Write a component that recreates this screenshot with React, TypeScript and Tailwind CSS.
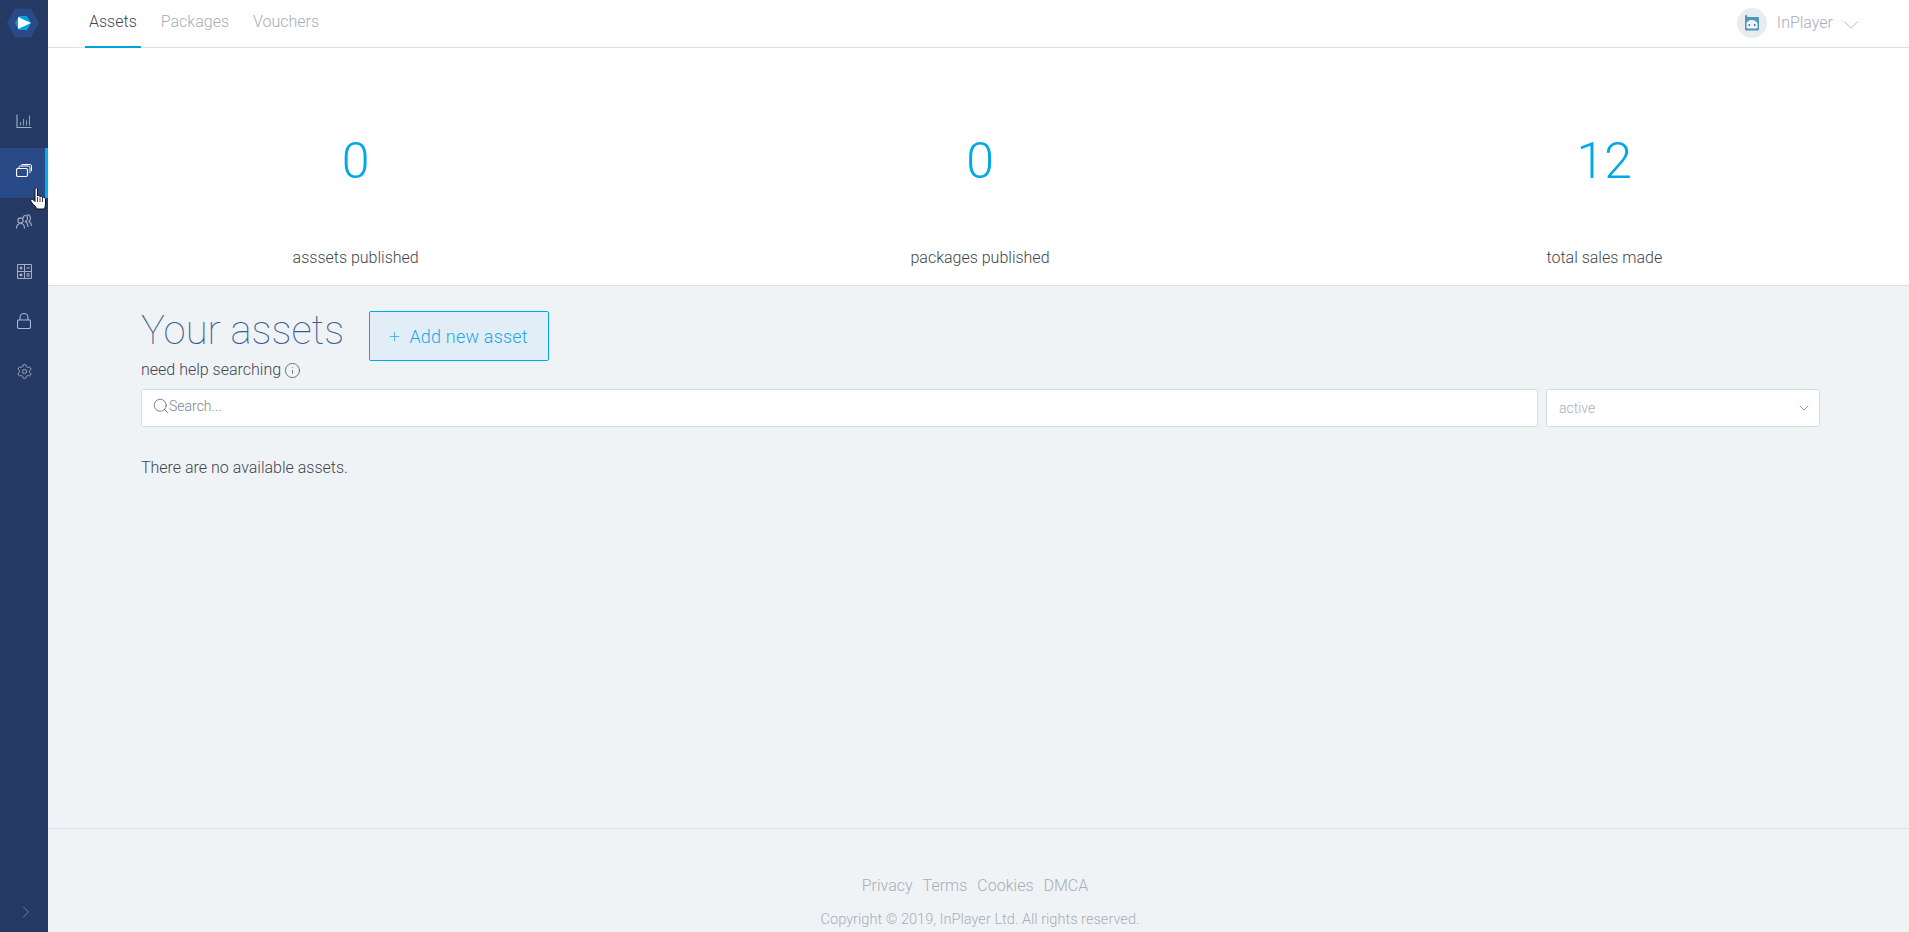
import { ChevronDown, ChevronRight, Info, Plus, Search, Settings } from "lucide-react";

const tabs = ["Assets", "Packages", "Vouchers"];
const stats = [
  { value: "0", label: "asssets published" },
  { value: "0", label: "packages published" },
  { value: "12", label: "total sales made" },
];

function Logo() {
  return (
    <svg width="34" height="30" viewBox="0 0 34 30">
      <polygon points="8,.5 24,.5 32,15 24,29.5 8,29.5 0,15" fill="#2a4a87" />
      <polygon points="12,8 20,8 24,15 20,22 12,22 8,15" fill="#00a3e0" />
      <polygon points="11,9 24,15 11,21" fill="#ffffff" />
    </svg>
  );
}

function ChartIcon() {
  return (
    <svg width="16" height="16" viewBox="0 0 16 16" fill="none" stroke="#a3afc5" strokeWidth="1.1">
      <path d="M1 1.5V14.5H15.5" />
      <path d="M4.5 12.5V9M7.5 12.5V6M10.5 12.5V7.5M13.5 12.5V2.5" stroke="#7f9cc0" />
    </svg>
  );
}

function CardsIcon() {
  return (
    <svg width="16" height="14" viewBox="0 0 16 14" fill="none" stroke="#ffffff" strokeWidth="1">
      <rect x="0.5" y="4.5" width="11" height="8" rx="1.5" strokeWidth="1.2" />
      <path d="M3 4V3.2C3 2.5 3.5 2 4.2 2H12.5C13.3 2 14 2.7 14 3.5V9" />
      <path d="M5.5 1.5V1.2C5.5 .8 5.8 .5 6.2 .5H14.2C15 .5 15.5 1 15.5 1.8V7" />
    </svg>
  );
}

function UsersIcon() {
  return (
    <svg width="16" height="15" viewBox="0 0 16 15" fill="none" stroke="#a3afc5" strokeWidth="1.1">
      <circle cx="4.5" cy="6.5" r="2.6" />
      <path d="M.5 14.5C.5 11.5 2 9.5 4.5 9.5S8.500 11.500 8.500 14.500" />
      <path d="M7 4.500C7 2.500 8 1.500 9.500 1.500S11.500 3 11.500 4.500 10.500 7 9.500 7.500C11 8.500 12 10.500 12 13" />
      <path d="M11 1C13 .5 14.500 2 14.500 4S13.500 7 13 7.500C14.500 8.500 15.500 10 15.500 12" />
    </svg>
  );
}

function CalcIcon() {
  return (
    <svg width="15" height="15" viewBox="0 0 15 15" fill="none" stroke="#a3afc5" strokeWidth="1.1">
      <rect x="0.5" y="0.500" width="14" height="14" rx="1" />
      <path d="M7.500 .5V14.500M.5 7.500H14.500" />
      <path d="M2.500 4H5.500M4 2.500V5.500M9.500 4H12.500M2.800 9.800L5.200 12.200M5.200 9.800L2.800 12.200M9.500 10H12.500M9.500 12H12.500" stroke="#c3ccdb" />
    </svg>
  );
}

function LockIcon() {
  return (
    <svg width="14" height="16" viewBox="0 0 14 16" fill="none" stroke="#a6bcd8" strokeWidth="1.1">
      <rect x="0.5" y="7" width="13" height="8.500" rx="1.500" />
      <path d="M3 7V4.500C3 2.300 4.800 .5 7 .5S11 2.300 11 4.500V7" />
    </svg>
  );
}

function HandCursor() {
  return (
    <svg width="17" height="23" viewBox="0 0 17 23" className="absolute left-[30px] top-[39px]">
      <path
        d="M5 2C5 .3 7.500 .3 7.500 2V9C7.500 8 10 8 10 9.500V10C10 9 12.500 9 12.500 10.500V11C12.500 10 15.500 10 15.500 12V17C15.500 19 15 20 14.500 22H7C6 20 4 18 2 16L.8 14C.2 12.500 2 11.500 3.500 13L5 14.500Z"
        fill="#ffffff"
        stroke="#111111"
        strokeWidth="1"
      />
      <path d="M7.500 10V15M10 10.500V15M12.500 11V15" stroke="#111111" strokeWidth="0.8" />
    </svg>
  );
}

function Avatar() {
  return (
    <div className="flex h-[30px] w-[30px] items-center justify-center rounded-full bg-[#e9ecef]">
      <svg width="18" height="18" viewBox="0 0 18 18">
        <path d="M2 2L3.500 .5L4.500 3H8L9.500 3H15C15.800 3 16 3.500 16 4V15C16 16 15.500 16.500 14.500 16.500H3.500C2.500 16.500 2 16 2 15Z" fill="#4f97ba" />
        <path d="M3.500 9C5 6.500 7.500 6 9 6C11.500 6 13.500 7.500 14.500 9.500V13C14.500 14 14 14.500 13 14.500H5C4 14.500 3.500 14 3.500 13Z" fill="#eef3f6" />
        <circle cx="6.300" cy="11" r="0.900" fill="#2c6f8f" />
        <circle cx="11.700" cy="11" r="0.900" fill="#2c6f8f" />
      </svg>
    </div>
  );
}

export default function App() {
  return (
    <div className="flex h-screen overflow-hidden bg-[#eff3f6] font-['Roboto',sans-serif] text-[16px] font-light text-[#3f4650]">
      <aside className="flex w-[48px] shrink-0 flex-col bg-[#253965]">
        <div className="flex h-[98px] justify-center pt-[8px]">
          <Logo />
        </div>
        <div className="flex h-[50px] items-center justify-center pb-[4px]">
          <ChartIcon />
        </div>
        <div className="relative flex h-[50px] items-center justify-center border-r-[3px] border-[#00adee] bg-[#2a4a87] pb-[4px] pl-[3px]">
          <CardsIcon />
          <HandCursor />
        </div>
        <div className="flex h-[50px] items-center justify-center pb-[4px]">
          <UsersIcon />
        </div>
        <div className="flex h-[50px] items-center justify-center pb-[4px]">
          <CalcIcon />
        </div>
        <div className="flex h-[50px] items-center justify-center pb-[4px]">
          <LockIcon />
        </div>
        <div className="flex h-[50px] items-center justify-center pb-[4px]">
          <Settings size={17} strokeWidth={1.3} color="#a3afc5" />
        </div>
        <div className="mt-auto flex h-[40px] items-center justify-center pl-[4px]">
          <ChevronRight size={20} strokeWidth={0.9} color="#7f96bb" />
        </div>
      </aside>

      <main className="flex min-w-0 flex-1 flex-col">
        <header className="flex h-[48px] shrink-0 items-stretch justify-between border-b border-[#dcdfe6] bg-white pl-[37px] pr-[45px]">
          <nav className="flex gap-[16px]">
            {tabs.map((tab, i) => (
              <a
                key={tab}
                className={
                  i === 0
                    ? "-mb-px border-b-2 border-[#00a3e0] px-[4px] pt-[10px] text-[#3f4650]"
                    : "px-[4px] pt-[10px] text-[#a9adb8]"
                }
              >
                {tab}
              </a>
            ))}
          </nav>
          <div className="flex items-center gap-[10px] pb-[2px] text-[#a9adb8]">
            <Avatar />
            <span>InPlayer</span>
            <ChevronDown size={26} strokeWidth={0.8} color="#a9adb8" className="ml-[-5px] mt-[5px]" />
          </div>
        </header>

        <section className="grid h-[238px] shrink-0 grid-cols-3 gap-x-[209px] border-b border-[#dcdfe6] bg-white pl-[100px] pr-[97px] text-center">
          {stats.map((stat) => (
            <div key={stat.label} className="flex flex-col items-center">
              <div className="mt-[83px] text-[50px] leading-[60px] font-light text-[#00a8ea]">{stat.value}</div>
              <div className="mt-[55px] leading-[24px]">{stat.label}</div>
            </div>
          ))}
        </section>

        <section className="flex-1 pl-[93px] pr-[89px] pt-[20px]">
          <div className="flex items-start gap-[25px]">
            <h1 className="text-[40px] leading-[50px] font-thin text-[#3a5c94]">Your assets</h1>
            <button className="mt-[5px] flex h-[50px] w-[180px] items-center justify-center gap-[7px] rounded-[2px] border border-[#00a8ea] bg-[#e2eef7] pr-[3px] text-[18px] font-light tracking-[0.2px] text-[#1fa6e6]">
              <Plus size={15} strokeWidth={1.2} />
              Add new asset
            </button>
          </div>
          <div className="mt-[-1px] flex items-center gap-[3px] leading-[20px]">
            need help searching
            <Info size={17} strokeWidth={1} color="#3f4650" />
          </div>
          <div className="mt-[9px] flex gap-[8px]">
            <div className="flex h-[38px] flex-1 items-center rounded-[2px] border border-[#d5dde6] bg-white pb-[4px] pl-[10px] text-[14px] text-[#7d838c]">
              <Search size={18} strokeWidth={1} color="#555b66" />
              <span className="ml-[-1px]">Search...</span>
            </div>
            <div className="flex h-[38px] w-[274px] items-center justify-between rounded-[2px] border border-[#d5dde6] bg-white pl-[12px] pr-[7px] text-[14px] text-[#a9adb8]">
              active
              <ChevronDown size={16} strokeWidth={1.1} color="#777c86" />
            </div>
          </div>
          <p className="mt-[29px] leading-[24px]">There are no available assets.</p>
        </section>

        <footer className="h-[104px] shrink-0 border-t border-[#dcdfe6] pt-[45px] text-center text-[#a9adb8]">
          <div className="flex justify-center gap-[10px] pr-[7px] leading-[24px]">
            <a>Privacy</a>
            <a>Terms</a>
            <a>Cookies</a>
            <a>DMCA</a>
          </div>
          <div className="mt-[11px] pl-[3px] text-[14.6px] leading-[20px]">Copyright © 2019, InPlayer Ltd. All rights reserved.</div>
        </footer>
      </main>
    </div>
  );
}
